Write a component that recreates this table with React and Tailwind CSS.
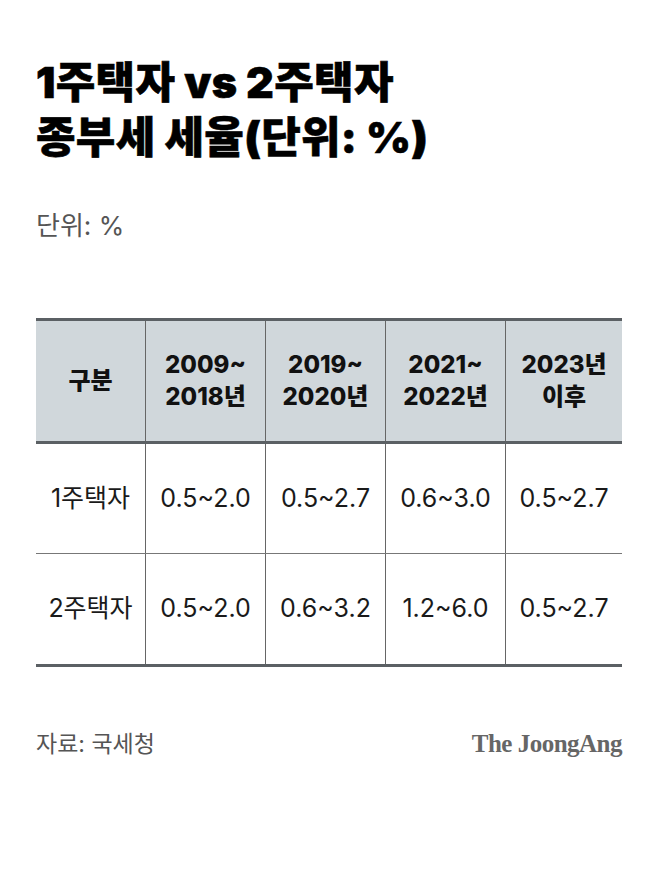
const KR = { fontFamily: 'Inter, "Noto Sans CJK KR", "Noto Sans", sans-serif' };

const header = ["구분", ["2009~", "2018년"], ["2019~", "2020년"], ["2021~", "2022년"], ["2023년", "이후"]];

const rows = [
  ["1주택자", "0.5~2.0", "0.5~2.7", "0.6~3.0", "0.5~2.7"],
  ["2주택자", "0.5~2.0", "0.6~3.2", "1.2~6.0", "0.5~2.7"],
];

const cols = "grid grid-cols-[109px_120px_120px_120px_117px]";

export default function App() {
  return (
    <div className="w-[658px] h-[881px] bg-white px-[36px] pt-[55px]" style={KR}>
      <h1 className="text-[43px] font-black leading-[55px] tracking-[0.3px] text-black [-webkit-text-stroke:0.6px_black]">
        1주택자 vs 2주택자
        <br />
        종부세 세율(단위: %)
      </h1>

      <p className="mt-[45px] text-[26px] leading-[32px] text-[#555] font-normal">단위: %</p>

      <div className="mt-[76px] w-[586px]">
        <div className={`${cols} h-[126px] bg-[#d0d7db] border-y-[3px] border-[#5b6064]`}>
          {header.map((h, i) => (
            <div
              key={i}
              className={`flex flex-col items-center justify-center text-[24px] font-extrabold leading-[32px] text-[#111] ${i > 0 ? "border-l border-[#666]" : ""}`}
            >
              {Array.isArray(h) ? h.map((t) => <span key={t}>{t}</span>) : h}
            </div>
          ))}
        </div>
        {rows.map((r, ri) => (
          <div
            key={ri}
            className={`${cols} ${ri === 0 ? "h-[110px] border-b border-[#777]" : "h-[113px] border-b-[3px] border-[#5b6064]"}`}
          >
            {r.map((c, i) => (
              <div
                key={i}
                className={`flex items-center justify-center text-[25px] text-[#1a1a1a] ${i > 0 ? "border-l border-[#666]" : ""}`}
              >
                {c}
              </div>
            ))}
          </div>
        ))}
      </div>

      <div className="mt-[58px] w-[586px] flex items-center justify-between">
        <span className="text-[23px] text-[#555]">자료: 국세청</span>
        <span
          className="text-[25px] font-bold text-[#666] tracking-[-0.5px]"
          style={{ fontFamily: '"Liberation Serif", "DejaVu Serif", serif' }}
        >
          The JoongAng
        </span>
      </div>
    </div>
  );
}
